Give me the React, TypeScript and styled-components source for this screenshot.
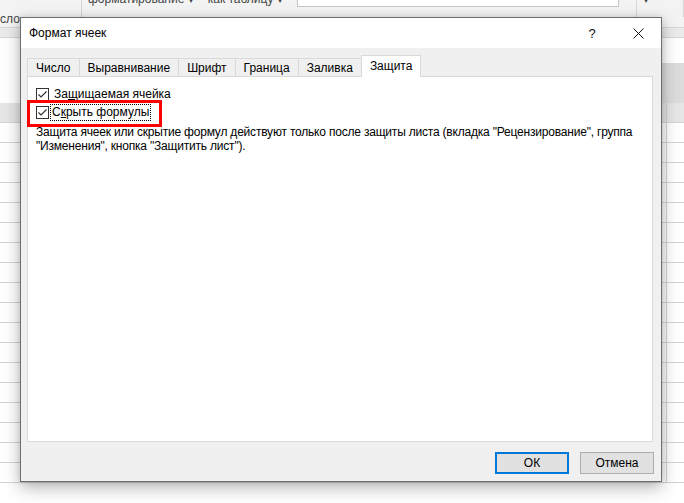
import React from 'react';
import styled, { createGlobalStyle } from 'styled-components';

const GlobalStyle = createGlobalStyle`
    html, body {
        margin: 0;
        padding: 0;
    }
    body {
        font-family: "Liberation Sans", Arial, sans-serif;
        font-size: 12px;
        color: #000;
        background: #fff;
    }
`;

const Desktop = styled.div`
    position: relative;
    width: 684px;
    height: 503px;
    overflow: hidden;
    background: #fff;
`;

/* ---------- excel behind the dialog ---------- */

const Ribbon = styled.div`
    height: 28px;
    box-sizing: border-box;
    background: #f3f3f3;
    border-bottom: 1px solid #d6d6d6;
    display: flex;
    color: #444;
`;

const RibbonGroup = styled.div<{ $width?: number }>`
    display: flex;
    align-items: flex-start;
    gap: 14px;
    padding-left: 6px;
    width: ${(p) => (p.$width ? `${p.$width}px` : 'auto')};
    flex: ${(p) => (p.$width ? 'none' : '1')};
    border-right: 1px solid #d6d6d6;
    height: 17px;
    overflow: hidden;
`;

const RibbonLeft = styled.div`
    width: 82px;
    border-right: 1px solid #d6d6d6;
    display: flex;
    align-items: flex-end;
    padding-bottom: 1px;
    box-sizing: border-box;
    font-size: 12px;
`;

const RibbonLabel = styled.span`
    margin-top: -8px;
    white-space: nowrap;
    font-size: 12px;
`;

const RibbonInput = styled.div`
    margin-top: -4px;
    width: 320px;
    height: 9px;
    border: 1px solid #c6c6c6;
    background: #fff;
`;

const SubStrip = styled.div`
    height: 9px;
    background: #ebebeb;
    border-bottom: 1px solid #d6d6d6;
`;

const FormulaArea = styled.div`
    height: 65px;
    background: #fff;
    display: flex;
    justify-content: flex-end;
`;

const ScrollBand = styled.div`
    width: 24px;
    margin-top: 25px;
    background: #dcdcdc;
`;

const Sheet = styled.div`
    display: grid;
    grid-template-columns: 27px repeat(11, 64px);
    grid-auto-rows: 20px;
`;

const Cell = styled.div<{ $header?: boolean }>`
    box-sizing: border-box;
    border-right: 1px solid #d4d4d4;
    border-bottom: 1px solid #d4d4d4;
    background: ${(p) => (p.$header ? '#e6e6e6' : '#fff')};
`;

/* ---------- dialog ---------- */

const Dialog = styled.div`
    position: absolute;
    left: 20px;
    top: 17px;
    width: 642px;
    height: 465px;
    box-sizing: border-box;
    border: 1px solid #6e6e6e;
    background: #f0f0f0;
    box-shadow: 0 6px 16px rgba(0, 0, 0, 0.28), 0 0 6px rgba(0, 0, 0, 0.12);
    display: flex;
    flex-direction: column;
`;

const TitleBar = styled.div`
    height: 30px;
    flex: none;
    background: #fff;
    display: flex;
    align-items: center;
    padding-left: 8px;
`;

const Title = styled.div`
    flex: 1;
    font-size: 12px;
`;

const CaptionButton = styled.div`
    width: 46px;
    height: 30px;
    display: flex;
    align-items: center;
    justify-content: center;
    font-size: 13px;
    color: #111;
`;

const Body = styled.div`
    flex: 1;
    padding: 7px 8px 0 6px;
    display: flex;
    flex-direction: column;
`;

const TabList = styled.div`
    display: flex;
    align-items: flex-start;
    height: 21px;
    position: relative;
    z-index: 1;
`;

const Tab = styled.div<{ $active?: boolean }>`
    box-sizing: border-box;
    height: ${(p) => (p.$active ? '22px' : '18px')};
    margin-top: ${(p) => (p.$active ? '0' : '3px')};
    margin-left: -1px;
    padding: 0 8px ${(p) => (p.$active ? '1px' : '0')};
    border: 1px solid #d9d9d9;
    border-bottom: 0;
    background: ${(p) => (p.$active ? '#fff' : '#f0f0f0')};
    display: flex;
    align-items: center;
    justify-content: center;
    font-size: 12px;
    line-height: 14px;

    &:first-child {
        margin-left: 0;
    }
`;

const Panel = styled.div`
    position: relative;
    height: 366px;
    box-sizing: border-box;
    border: 1px solid #d9d9d9;
    background: #fff;
    padding: 8px 8px;
`;

const CheckRow = styled.div`
    display: flex;
    align-items: center;
    height: 18px;
`;

const Box = styled.div`
    width: 13px;
    height: 13px;
    box-sizing: border-box;
    border: 1px solid #333;
    background: #fff;
    margin-right: 4px;
    display: flex;
    align-items: center;
    justify-content: center;
`;

const CheckLabel = styled.span<{ $focused?: boolean }>`
    font-size: 12px;
    line-height: 15px;
    padding: 0 1px;
    margin-left: ${(p) => (p.$focused ? '-2px' : '0')};
    outline: ${(p) => (p.$focused ? '1px dotted #000' : 'none')};
    outline-offset: 0;
`;

const Note = styled.p`
    margin: 4px 0 0;
    font-size: 12px;
    line-height: 14px;
    letter-spacing: -0.2px;
`;

const Highlight = styled.div`
    position: absolute;
    left: -1px;
    top: 23px;
    width: 135px;
    height: 27px;
    box-sizing: border-box;
    border: 3px solid #ff0000;
`;

const Footer = styled.div`
    display: flex;
    justify-content: flex-end;
    gap: 11px;
    padding: 10px 0 0;
    margin-right: -1px;
`;

const Button = styled.button<{ $default?: boolean }>`
    width: 74px;
    height: 22px;
    box-sizing: border-box;
    font-family: inherit;
    font-size: 12px;
    color: #000;
    background: #e1e1e1;
    border: ${(p) => (p.$default ? '2px solid #0078d7' : '1px solid #adadad')};
    padding: 0;
    margin: 0;
`;

function Check() {
    return (
        <Box>
            <svg width="11" height="11" viewBox="0 0 11 11">
                <path d="M1.5 5.5 L4 8 L9.5 2.5" fill="none" stroke="#333" strokeWidth="1.2" />
            </svg>
        </Box>
    );
}

function CloseIcon() {
    return (
        <svg width="11" height="11" viewBox="0 0 11 11">
            <path d="M0.5 0.5 L10.5 10.5 M10.5 0.5 L0.5 10.5" stroke="#111" strokeWidth="1" />
        </svg>
    );
}

const tabs = ['Число', 'Выравнивание', 'Шрифт', 'Граница', 'Заливка', 'Защита'];

export default function App() {
    const rows = 19;
    const cols = 12;

    return (
        <>
            <GlobalStyle />
            <Desktop>
                <Ribbon>
                    <RibbonLeft>сло</RibbonLeft>
                    <RibbonGroup $width={548}>
                        <RibbonLabel>форматирование ▾</RibbonLabel>
                        <RibbonLabel>как таблицу ▾</RibbonLabel>
                        <RibbonInput />
                    </RibbonGroup>
                    <RibbonGroup>
                        <RibbonLabel>▾</RibbonLabel>
                    </RibbonGroup>
                </Ribbon>
                <SubStrip />
                <FormulaArea>
                    <ScrollBand />
                </FormulaArea>
                <Sheet>
                    {Array.from({ length: rows * cols }).map((_, i) => (
                        <Cell key={i} $header={i < cols} />
                    ))}
                </Sheet>

                <Dialog>
                    <TitleBar>
                        <Title>Формат ячеек</Title>
                        <CaptionButton>?</CaptionButton>
                        <CaptionButton>
                            <CloseIcon />
                        </CaptionButton>
                    </TitleBar>
                    <Body>
                        <TabList>
                            {tabs.map((tab, index) => (
                                <Tab key={tab} $active={index === tabs.length - 1}>
                                    {tab}
                                </Tab>
                            ))}
                        </TabList>
                        <Panel>
                            <CheckRow>
                                <Check />
                                <CheckLabel>
                                    За<u>щ</u>ищаемая ячейка
                                </CheckLabel>
                            </CheckRow>
                            <CheckRow>
                                <Check />
                                <CheckLabel $focused>
                                    С<u>к</u>рыть формулы
                                </CheckLabel>
                            </CheckRow>
                            <Note>
                                Защита ячеек или скрытие формул действуют только после защиты листа (вкладка
                                "Рецензирование", группа "Изменения", кнопка "Защитить лист").
                            </Note>
                            <Highlight />
                        </Panel>
                        <Footer>
                            <Button $default>ОК</Button>
                            <Button>Отмена</Button>
                        </Footer>
                    </Body>
                </Dialog>
            </Desktop>
        </>
    );
}
